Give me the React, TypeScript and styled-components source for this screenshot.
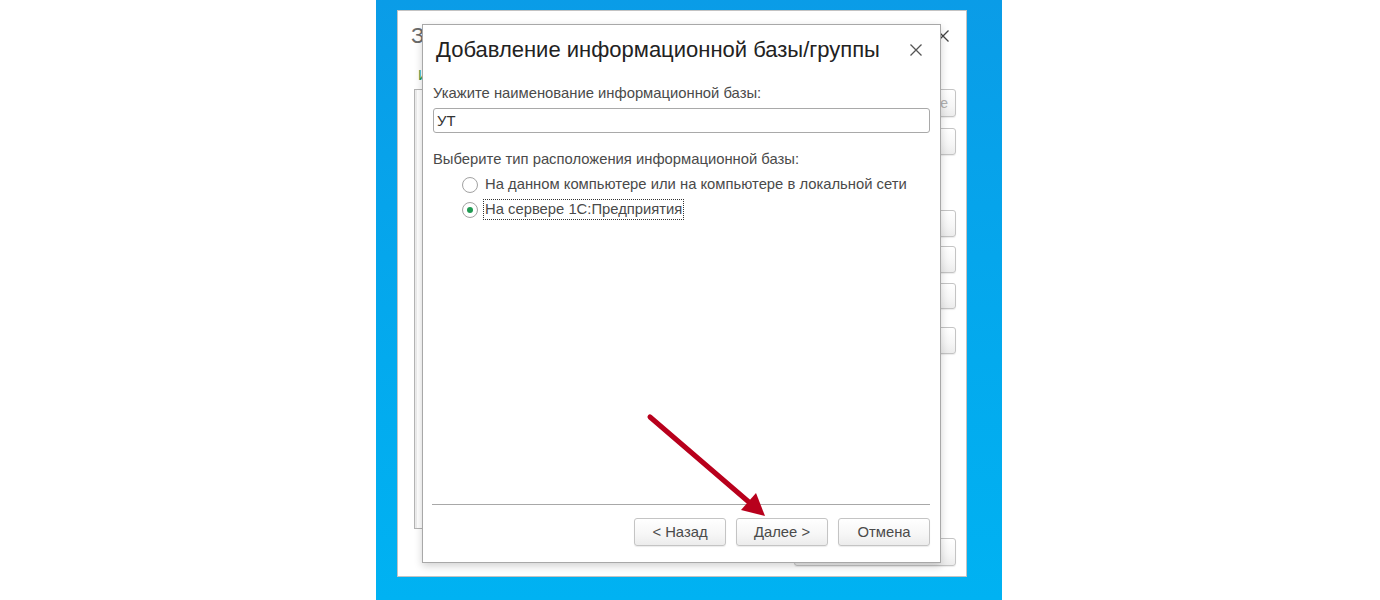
import React from 'react'
import styled, { createGlobalStyle } from 'styled-components'

const GlobalStyle = createGlobalStyle`
  html, body {
    margin: 0;
    padding: 0;
    background: #ffffff;
  }
  body {
    font-family: 'Liberation Sans', Arial, sans-serif;
  }
  * {
    box-sizing: border-box;
  }
`
const Page = styled.div`
  display: flex;
  justify-content: center;
  width: 100%;
  height: 600px;
  padding-right: 2px;
  overflow: hidden;
`
const Desktop = styled.div`
  position: relative;
  width: 626px;
  height: 600px;
  flex-shrink: 0;
  background: linear-gradient(180deg, #0a9ce7 0%, #03aaee 60%, #00b2f2 100%);
`
const LauncherWindow = styled.div`
  position: absolute;
  left: 21px;
  top: 10px;
  width: 570px;
  height: 567px;
  display: flex;
  flex-direction: column;
  background: #ffffff;
  border: 1px solid #c3c3c3;
  padding: 0 10px 10px 16px;
`
const WindowTitle = styled.div<{ $active?: boolean }>`
  display: flex;
  align-items: center;
  justify-content: space-between;
  height: 50px;
  flex-shrink: 0;
  font-size: 22px;
  color: ${p => p.$active ? '#222222' : '#6b6b6b'};
`
const LauncherTitle = styled(WindowTitle)`
  margin-left: -3px;
  padding-right: 6px;
`
const CloseMark = styled.span<{ $active?: boolean }>`
  display: flex;
  width: 14px;
  height: 14px;
  color: ${p => p.$active ? '#555555' : '#444444'};
`
const LinkRow = styled.div`
  height: 28px;
  display: flex;
  align-items: center;
  padding-left: 4px;
  font-size: 14.8px;
  color: #2f9a4a;
  flex-shrink: 0;
`
const LauncherMain = styled.div`
  flex: 1;
  display: flex;
  gap: 10px;
  min-height: 0;
`
const BaseList = styled.div`
  flex: 1;
  border: 1px solid #b4b4b4;
  box-shadow: inset 2px 0 0 #ececec;
`
const SideButtons = styled.div`
  width: 124px;
  display: flex;
  flex-direction: column;
`
const PushButton = styled.button<{ $mt?: number; $w?: number; $h?: number; $disabled?: boolean }>`
  width: ${p => p.$w ? `${p.$w}px` : '100%'};
  height: ${p => p.$h || 27}px;
  margin-top: ${p => p.$mt || 0}px;
  padding: 0;
  display: flex;
  align-items: center;
  justify-content: center;
  font-family: 'Liberation Sans', Arial, sans-serif;
  font-size: 14.8px;
  color: ${p => p.$disabled ? '#b0b0b0' : '#4a4a4a'};
  background: linear-gradient(180deg, #ffffff 0%, #f6f6f6 60%, #ececec 100%);
  border: 1px solid #c4c4c4;
  border-radius: 3px;
  box-shadow: 0 1px 1px rgba(0, 0, 0, 0.08);
  white-space: nowrap;
  flex-shrink: 0;
`
const SideButton = styled(PushButton)`
  font-size: 14px;
`
const LauncherFooter = styled.div`
  display: flex;
  justify-content: flex-end;
  margin-top: 9px;
  flex-shrink: 0;
`
const Dialog = styled.div`
  position: absolute;
  left: 46px;
  top: 24px;
  width: 519px;
  height: 539px;
  display: flex;
  flex-direction: column;
  background: #ffffff;
  border: 1px solid #a8a8a8;
  box-shadow: 0 3px 8px rgba(0, 0, 0, 0.18);
  padding: 0 10px 16px 10px;
`
const DialogTitle = styled(WindowTitle)`
  padding: 0 7px 0 3px;
`
const FieldLabel = styled.div<{ $mt?: number }>`
  margin-top: ${p => p.$mt || 0}px;
  font-size: 14.8px;
  line-height: 16px;
  color: #4a4a4a;
`
const TextInput = styled.div`
  margin-top: 7px;
  height: 25px;
  display: flex;
  align-items: center;
  padding-left: 3px;
  border: 1px solid #a9a9a9;
  border-radius: 3px;
  font-size: 14.8px;
  color: #333333;
`
const RadioGroup = styled.div`
  display: flex;
  flex-direction: column;
  margin-top: 5px;
  padding-left: 29px;
`
const RadioRow = styled.div`
  height: 25px;
  display: flex;
  align-items: center;
  gap: 8px;
  font-size: 14.8px;
  color: #4a4a4a;
`
const RadioCircle = styled.span<{ $checked?: boolean }>`
  width: 16px;
  height: 16px;
  border-radius: 50%;
  border: 1px solid #a3a3a3;
  background: radial-gradient(circle, #ffffff 60%, #f2f2f2 100%);
  display: flex;
  align-items: center;
  justify-content: center;
  flex-shrink: 0;
  &::after {
    content: '';
    display: ${p => p.$checked ? 'block' : 'none'};
    width: 6px;
    height: 6px;
    border-radius: 50%;
    background: #1f9a52;
  }
`
const RadioText = styled.span<{ $focused?: boolean }>`
  margin-left: -3px;
  padding: 1px 1px 2px 1px;
  border: 1px ${p => p.$focused ? 'dotted #333333' : 'solid transparent'};
`
const Spacer = styled.div`
  flex: 1;
`
const Separator = styled.div`
  height: 1px;
  margin-left: -1px;
  background: #a8a8a8;
`
const DialogButtons = styled.div`
  display: flex;
  justify-content: flex-end;
  gap: 10px;
  margin-top: 13px;
`
const Annotation = styled.svg`
  position: absolute;
  left: 0;
  top: 0;
  width: 626px;
  height: 600px;
  pointer-events: none;
`

const Cross = ({ active }: { active?: boolean }) => (
  <CloseMark $active={active}>
    <svg width="14" height="14" viewBox="0 0 14 14">
      <path d="M1.5 1.5 L12.5 12.5 M12.5 1.5 L1.5 12.5" stroke="currentColor" strokeWidth="1.3" fill="none" />
    </svg>
  </CloseMark>
)

const sideButtons = [
  { label: '1С:Предприятие', mt: 0, h: 28, disabled: true },
  { label: 'Конфигуратор', mt: 11, h: 27, disabled: true },
  { label: 'Добавить...', mt: 55, h: 27 },
  { label: 'Изменить...', mt: 9, h: 27 },
  { label: 'Удалить', mt: 10, h: 26 },
  { label: 'Настройка...', mt: 18, h: 27 },
]

const App = () => {
  return (
    <Page>
      <GlobalStyle />
      <Desktop>
        <LauncherWindow>
          <LauncherTitle>
            <span>Запуск 1С:Предприятия</span>
            <Cross />
          </LauncherTitle>
          <LinkRow>Информационные базы</LinkRow>
          <LauncherMain>
            <BaseList />
            <SideButtons>
              {sideButtons.map(b => (
                <SideButton key={b.label} $mt={b.mt} $h={b.h} $disabled={b.disabled}>{b.label}</SideButton>
              ))}
            </SideButtons>
          </LauncherMain>
          <LauncherFooter>
            <PushButton $w={162} $h={28}>Выход</PushButton>
          </LauncherFooter>
        </LauncherWindow>

        <Dialog>
          <DialogTitle $active>
            <span>Добавление информационной базы/группы</span>
            <Cross active />
          </DialogTitle>
          <FieldLabel $mt={10}>Укажите наименование информационной базы:</FieldLabel>
          <TextInput>УТ</TextInput>
          <FieldLabel $mt={18}>Выберите тип расположения информационной базы:</FieldLabel>
          <RadioGroup>
            <RadioRow>
              <RadioCircle />
              <RadioText>На данном компьютере или на компьютере в локальной сети</RadioText>
            </RadioRow>
            <RadioRow>
              <RadioCircle $checked />
              <RadioText $focused>На сервере 1С:Предприятия</RadioText>
            </RadioRow>
          </RadioGroup>
          <Spacer />
          <Separator />
          <DialogButtons>
            <PushButton $w={92} $h={28}>&lt; Назад</PushButton>
            <PushButton $w={92} $h={28}>Далее &gt;</PushButton>
            <PushButton $w={92} $h={28}>Отмена</PushButton>
          </DialogButtons>
        </Dialog>

        <Annotation viewBox="0 0 626 600">
          <path d="M274 417 L374 503" stroke="#b8001c" strokeWidth="5" strokeLinecap="round" fill="none" />
          <polygon points="389,516 365,510 380,493" fill="#b8001c" />
        </Annotation>
      </Desktop>
    </Page>
  )
}

export default App
